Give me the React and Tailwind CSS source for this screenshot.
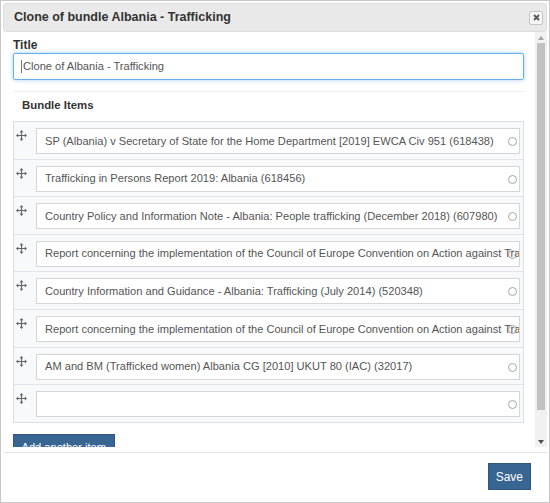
import React from 'react';

const items = [
  'SP (Albania) v Secretary of State for the Home Department [2019] EWCA Civ 951 (618438)',
  'Trafficking in Persons Report 2019: Albania (618456)',
  'Country Policy and Information Note - Albania: People trafficking (December 2018) (607980)',
  'Report concerning the implementation of the Council of Europe Convention on Action against Trafficking in Human Beings by Albania (600001)',
  'Country Information and Guidance - Albania: Trafficking (July 2014) (520348)',
  'Report concerning the implementation of the Council of Europe Convention on Action against Trafficking in Human Beings by Albania (600002)',
  'AM and BM (Trafficked women) Albania CG [2010] UKUT 80 (IAC) (32017)',
  '',
];

function MoveIcon() {
  return (
    <svg width="11" height="11" viewBox="0 0 11 11" className="text-[#666]">
      <path d="M5.5 1.5v8M1.5 5.5h8" stroke="currentColor" strokeWidth="1.2" />
      <path d="M5.5 0L3.6 2.2h3.8z M5.5 11L3.6 8.8h3.8z M0 5.5l2.2-1.9v3.8z M11 5.5L8.8 3.6v3.8z" fill="currentColor" />
    </svg>
  );
}

function ItemRow({ text, last }) {
  return (
    <div className={`flex bg-[#f7f9fb] pt-[6px] pb-[4.6px] ${last ? '' : 'border-b border-[#dfe5eb]'}`}>
      <div className="w-[22px] shrink-0 flex pt-[2px] pl-[2px]">
        <MoveIcon />
      </div>
      <div className="relative flex-1 mr-[3px] h-[26px] bg-white border border-[#d6d6d6] flex items-center overflow-hidden">
        <span className="pl-[8px] pr-[14px] whitespace-nowrap text-[11.1px] text-[#555]">{text}</span>
        <span className="absolute right-[2px] top-[8px] w-[9px] h-[9px] rounded-full border-[1.5px] border-[#a5a5a5]" />
      </div>
    </div>
  );
}

export default function App() {
  return (
    <div className="w-[550px] h-[503px] bg-white border border-[#c8c8c8] p-[2px] flex flex-col" style={{ fontFamily: '"Liberation Sans", Arial, sans-serif' }}>
      <div className="h-[29px] shrink-0 bg-[#e9e9e9] border border-[#dddddd] rounded-[3px] flex items-center justify-between pl-[10px] pr-[3px]">
        <span className="text-[12.5px] font-bold text-[#333]">Clone of bundle Albania - Trafficking</span>
        <button className="w-[14px] h-[14px] bg-[#f6f6f6] border border-[#c5c5c5] rounded-[2px] flex items-center justify-center">
          <svg width="7" height="7" viewBox="0 0 7 7">
            <path d="M1 1l5 5M6 1L1 6" stroke="#555" strokeWidth="1.8" />
          </svg>
        </button>
      </div>

      <div className="h-[415px] shrink-0 flex">
        <div className="flex-1 overflow-hidden pl-[10px] pr-[11px] pt-[6px]">
          <div className="text-[12px] font-bold text-[#333] leading-[15px]">Title</div>
          <div className="h-[27px] border border-[#66afe9] rounded-[2px] shadow-[0_0_4px_rgba(102,175,233,0.6)] flex items-center pl-[7px]">
            <span className="w-px h-[13px] bg-[#777] mr-[1px]" />
            <span className="text-[11.1px] text-[#555]">Clone of Albania - Trafficking</span>
          </div>
          <div className="mt-[11px] h-px bg-[#eeeeee]" />
          <div className="mt-[6px] pl-[9px] text-[11.4px] font-bold text-[#333] leading-[15px]">Bundle Items</div>
          <div className="mt-[8px] border border-[#d9e0e6]">
            {items.map((t, i) => (
              <ItemRow key={i} text={t} last={i === items.length - 1} />
            ))}
          </div>
          <button className="mt-[11px] h-[27px] px-[7.5px] bg-[#386592] border border-[#2f5680] text-white text-[11.1px]">
            Add another item
          </button>
        </div>
        <div className="w-[12px] shrink-0 bg-[#f1f1f1] flex flex-col items-center">
          <div className="h-[11px] flex items-center justify-center">
            <svg width="6" height="4" viewBox="0 0 6 4"><path d="M3 0L6 4H0z" fill="#a3a3a3" /></svg>
          </div>
          <div className="w-[8px] h-[367px] bg-[#c1c1c1]" />
          <div className="flex-1 flex items-end justify-center pb-[3px]">
            <svg width="6" height="4" viewBox="0 0 6 4"><path d="M0 0h6L3 4z" fill="#505050" /></svg>
          </div>
        </div>
      </div>

      <div className="mt-[5px] border-t border-[#e5e5e5] flex justify-end pt-[10px] pr-[16px]">
        <button className="h-[27px] px-[7px] bg-[#386592] border border-[#2f5680] text-white text-[12px]">Save</button>
      </div>
    </div>
  );
}
